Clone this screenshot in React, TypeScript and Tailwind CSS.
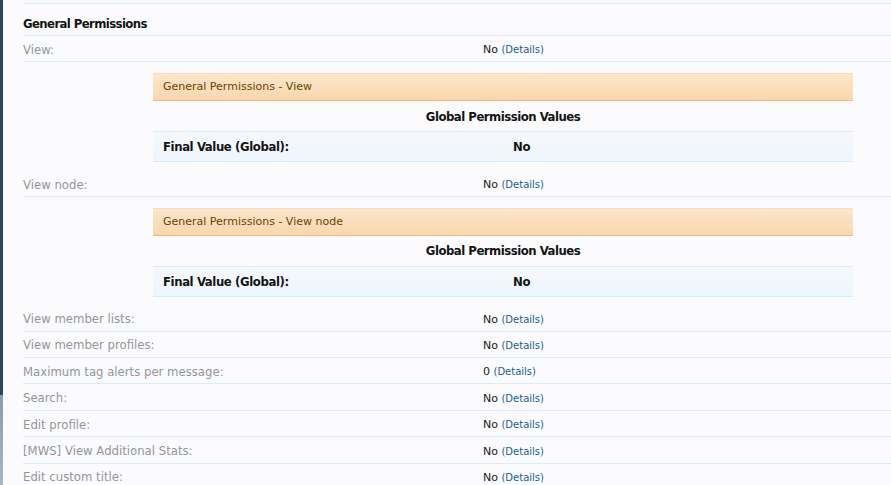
const font = { fontFamily: '"DejaVu Sans", Tahoma, sans-serif' };
const bold = {
  fontFamily: '"DejaVu Sans Condensed", "DejaVu Sans", Tahoma, sans-serif',
  fontStretch: "condensed",
};

type Perm = { label: string; value: string; box?: string };

const rows: Perm[] = [
  { label: "View:", value: "No", box: "General Permissions - View" },
  { label: "View node:", value: "No", box: "General Permissions - View node" },
  { label: "View member lists:", value: "No" },
  { label: "View member profiles:", value: "No" },
  { label: "Maximum tag alerts per message:", value: "0" },
  { label: "Search:", value: "No" },
  { label: "Edit profile:", value: "No" },
  { label: "[MWS] View Additional Stats:", value: "No" },
  { label: "Edit custom title:", value: "No" },
];

function DetailBox({ title, value }: { title: string; value: string }) {
  return (
    <div className="mt-[10.6px] mb-[8.6px] ml-[130px] w-[700px]">
      <div className="flex h-[28px] items-center border-t border-b border-t-[#f8dcbc] border-b-[#f9bc6d] bg-gradient-to-b from-[#fce6cb] to-[#f9d7ad] px-[10px] pt-[1px] text-[11px] text-[#6d3f03]">
        {title}
      </div>
      <div
        className="flex h-[31px] items-center justify-center border-b border-[#d7edfc] pt-[1px] text-[13px] font-bold tracking-[-0.5px] text-[#141414]"
        style={bold}
      >
        Global Permission Values
      </div>
      <div
        className="flex h-[30px] items-center border-b border-[#d7edfc] bg-gradient-to-b from-[#f6f9fc] to-[#eef5fc] pt-[1px] text-[13px] font-bold tracking-[-0.4px] text-[#141414]"
        style={bold}
      >
        <div className="w-[360px] pl-[10px]">Final Value (Global):</div>
        <div>{value}</div>
      </div>
    </div>
  );
}

function Row({ p }: { p: Perm }) {
  return (
    <>
      <div className="flex h-[26.4px] items-center border-b border-[#d7edfc] pt-[4px]">
        <div className="w-[460px] text-[11.7px] text-[#969696]">{p.label}</div>
        <div className="text-[11px] text-[#1a1a1a]">
          {p.value}{" "}
          <a className="text-[10px] text-[#176093]">(Details)</a>
        </div>
      </div>
      {p.box && <DetailBox title={p.box} value={p.value} />}
    </>
  );
}

export default function App() {
  return (
    <div className="flex h-[485px] w-[891px] overflow-hidden bg-[#fbfbfe]" style={font}>
      <div className="flex w-[3px] flex-col">
        <div className="h-[395px] bg-[#2b475b]" />
        <div className="flex-1 bg-gradient-to-b from-[#8c9ba6] to-[#a9b6bf]" />
      </div>
      <div className="flex-1 pl-[20px]">
        <div className="h-[4px] border-b border-[#d7edfc]" />
        <div
          className="flex h-[32px] items-center border-b border-[#d7edfc] pt-[8px] text-[13px] font-bold tracking-[-0.6px] text-[#141414]"
          style={bold}
        >
          General Permissions
        </div>
        {rows.map((p) => (
          <Row key={p.label} p={p} />
        ))}
      </div>
    </div>
  );
}
